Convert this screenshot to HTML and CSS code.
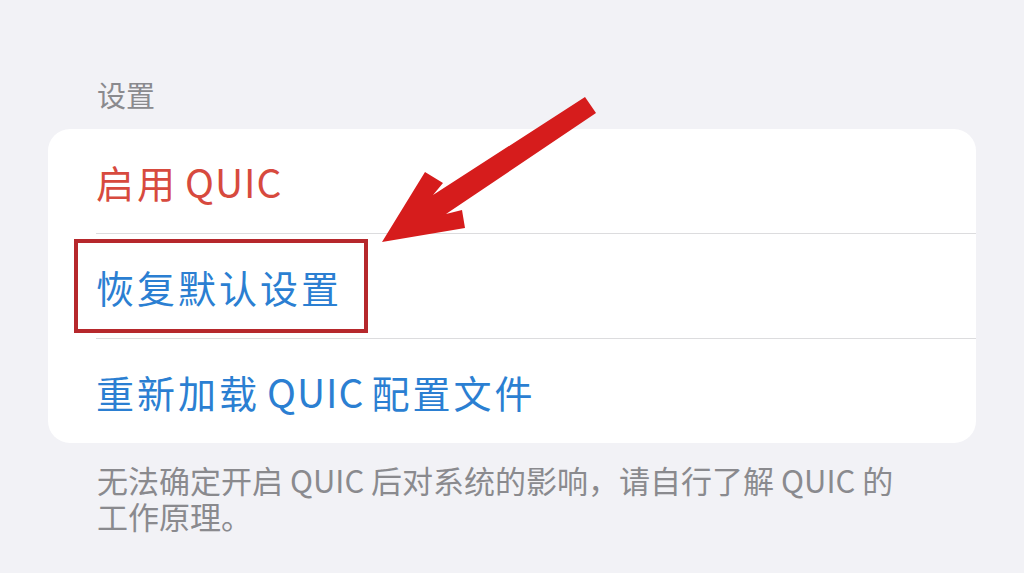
FILE: index.html
```html
<!DOCTYPE html>
<html lang="zh-CN">
<head>
    <meta charset="UTF-8">
    <meta name="viewport" content="width=device-width, initial-scale=1.0">
    <title>设置</title>
    <link rel="stylesheet" href="styles.css">
</head>
<body>
    <div class="page">
        <div class="section-title">设置</div>
        <div class="card">
            <div class="row row-danger">启用<span class="latin">QUIC</span></div>
            <div class="row row-link row-marked">
                恢复默认设置
                <span class="mark-box"></span>
            </div>
            <div class="row row-link">重新加载<span class="latin">QUIC</span>配置文件</div>
        </div>
        <p class="section-footer">无法确定开启 QUIC 后对系统的影响，请自行了解 QUIC 的工作原理。</p>
    </div>

    <svg class="arrow" width="1024" height="573" viewBox="0 0 1024 573">
        <polygon points="382,242 425,172 443,183 433,195 585,97 596,113 446,214 462,210 465,228" fill="#d61c1c"/>
    </svg>
</body>
</html>
```

FILE: styles.css
```css
body {
    margin: 0;
    background-color: #f2f2f6;
    font-family: "Noto Sans CJK SC", "Noto Sans", sans-serif;
    overflow: hidden;
}
.page {
    padding: 76px 48px 0 48px;
}
.section-title {
    padding-left: 49px;
    margin-bottom: 17px;
    font-size: 29px;
    line-height: 36px;
    color: #8a8a8e;
}
.card {
    padding-left: 48px;
    border-radius: 22px;
    background-color: #fff;
}
.row {
    display: flex;
    align-items: center;
    height: 104px;
    box-sizing: border-box;
    font-size: 38px;
    letter-spacing: 3px;
    border-bottom: 1px solid #dcdcde;
}
.row:last-child {
    border-bottom: none;
}
.row:not(:last-child) {
    height: 105px;
}
.row .latin {
    margin: 0 7px;
    font-size: 39px;
    letter-spacing: 1px;
}
.row-danger {
    color: #d74a3e;
}
.row-link {
    color: #2b7fd2;
}
.row-marked {
    position: relative;
}
.mark-box {
    position: absolute;
    left: -22px;
    top: 5px;
    width: 294px;
    height: 94px;
    box-sizing: border-box;
    border: 4px solid #b6282c;
}
.section-footer {
    margin: 0;
    padding: 19px 0 0 49px;
    max-width: 820px;
    font-size: 31px;
    line-height: 36px;
    color: #8a8a8e;
}
.arrow {
    position: absolute;
    left: 0;
    top: 0;
    pointer-events: none;
}
```
